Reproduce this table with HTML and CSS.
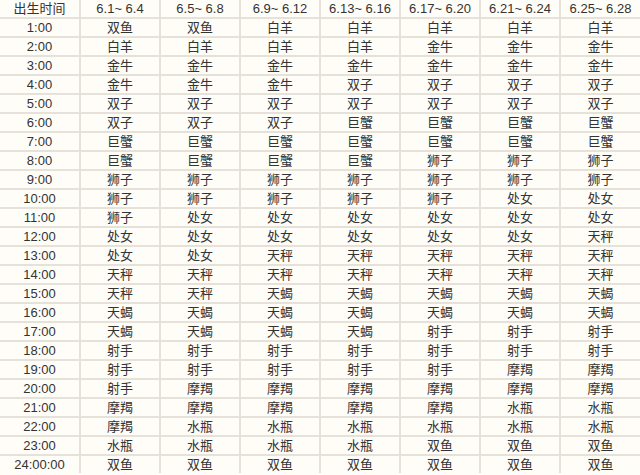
FILE: index.html
```html
<!DOCTYPE html>
<html lang="zh">
<head>
<meta charset="utf-8">
<link rel="stylesheet" href="styles.css">
</head>
<body>
<table class="zodiac">
<tr><td>出生时间</td><td>6.1~ 6.4</td><td>6.5~ 6.8</td><td>6.9~ 6.12</td><td>6.13~ 6.16</td><td>6.17~ 6.20</td><td>6.21~ 6.24</td><td>6.25~ 6.28</td></tr>
<tr><td>1:00</td><td>双鱼</td><td>双鱼</td><td>白羊</td><td>白羊</td><td>白羊</td><td>白羊</td><td>白羊</td></tr>
<tr><td>2:00</td><td>白羊</td><td>白羊</td><td>白羊</td><td>白羊</td><td>金牛</td><td>金牛</td><td>金牛</td></tr>
<tr><td>3:00</td><td>金牛</td><td>金牛</td><td>金牛</td><td>金牛</td><td>金牛</td><td>金牛</td><td>金牛</td></tr>
<tr><td>4:00</td><td>金牛</td><td>金牛</td><td>金牛</td><td>双子</td><td>双子</td><td>双子</td><td>双子</td></tr>
<tr><td>5:00</td><td>双子</td><td>双子</td><td>双子</td><td>双子</td><td>双子</td><td>双子</td><td>双子</td></tr>
<tr><td>6:00</td><td>双子</td><td>双子</td><td>双子</td><td>巨蟹</td><td>巨蟹</td><td>巨蟹</td><td>巨蟹</td></tr>
<tr><td>7:00</td><td>巨蟹</td><td>巨蟹</td><td>巨蟹</td><td>巨蟹</td><td>巨蟹</td><td>巨蟹</td><td>巨蟹</td></tr>
<tr><td>8:00</td><td>巨蟹</td><td>巨蟹</td><td>巨蟹</td><td>巨蟹</td><td>狮子</td><td>狮子</td><td>狮子</td></tr>
<tr><td>9:00</td><td>狮子</td><td>狮子</td><td>狮子</td><td>狮子</td><td>狮子</td><td>狮子</td><td>狮子</td></tr>
<tr><td>10:00</td><td>狮子</td><td>狮子</td><td>狮子</td><td>狮子</td><td>狮子</td><td>处女</td><td>处女</td></tr>
<tr><td>11:00</td><td>狮子</td><td>处女</td><td>处女</td><td>处女</td><td>处女</td><td>处女</td><td>处女</td></tr>
<tr><td>12:00</td><td>处女</td><td>处女</td><td>处女</td><td>处女</td><td>处女</td><td>处女</td><td>天秤</td></tr>
<tr><td>13:00</td><td>处女</td><td>处女</td><td>天秤</td><td>天秤</td><td>天秤</td><td>天秤</td><td>天秤</td></tr>
<tr><td>14:00</td><td>天秤</td><td>天秤</td><td>天秤</td><td>天秤</td><td>天秤</td><td>天秤</td><td>天秤</td></tr>
<tr><td>15:00</td><td>天秤</td><td>天秤</td><td>天蝎</td><td>天蝎</td><td>天蝎</td><td>天蝎</td><td>天蝎</td></tr>
<tr><td>16:00</td><td>天蝎</td><td>天蝎</td><td>天蝎</td><td>天蝎</td><td>天蝎</td><td>天蝎</td><td>天蝎</td></tr>
<tr><td>17:00</td><td>天蝎</td><td>天蝎</td><td>天蝎</td><td>天蝎</td><td>射手</td><td>射手</td><td>射手</td></tr>
<tr><td>18:00</td><td>射手</td><td>射手</td><td>射手</td><td>射手</td><td>射手</td><td>射手</td><td>射手</td></tr>
<tr><td>19:00</td><td>射手</td><td>射手</td><td>射手</td><td>射手</td><td>射手</td><td>摩羯</td><td>摩羯</td></tr>
<tr><td>20:00</td><td>射手</td><td>摩羯</td><td>摩羯</td><td>摩羯</td><td>摩羯</td><td>摩羯</td><td>摩羯</td></tr>
<tr><td>21:00</td><td>摩羯</td><td>摩羯</td><td>摩羯</td><td>摩羯</td><td>摩羯</td><td>水瓶</td><td>水瓶</td></tr>
<tr><td>22:00</td><td>摩羯</td><td>水瓶</td><td>水瓶</td><td>水瓶</td><td>水瓶</td><td>水瓶</td><td>水瓶</td></tr>
<tr><td>23:00</td><td>水瓶</td><td>水瓶</td><td>水瓶</td><td>水瓶</td><td>双鱼</td><td>双鱼</td><td>双鱼</td></tr>
<tr><td>24:00:00</td><td>双鱼</td><td>双鱼</td><td>双鱼</td><td>双鱼</td><td>双鱼</td><td>双鱼</td><td>双鱼</td></tr>
</table>
</body>
</html>
```

FILE: styles.css
```css
html, body {
  margin: 0;
  padding: 0;
  background: #fffdf8;
}
.zodiac {
  width: 640px;
  table-layout: fixed;
  border-collapse: collapse;
  font-family: "Liberation Sans", "Noto Sans CJK SC", sans-serif;
  font-size: 13px;
  color: #333333;
}
.zodiac td {
  height: 17px;
  padding: 0;
  line-height: 17px;
  text-align: center;
  border: 2px solid #e6e2da;
  white-space: nowrap;
}
.zodiac tr:first-child td {
  border-top: none;
}
.zodiac td:first-child {
  border-left: none;
}
.zodiac td:last-child {
  border-right: none;
}
.zodiac tr:last-child td {
  border-bottom: none;
}
```
